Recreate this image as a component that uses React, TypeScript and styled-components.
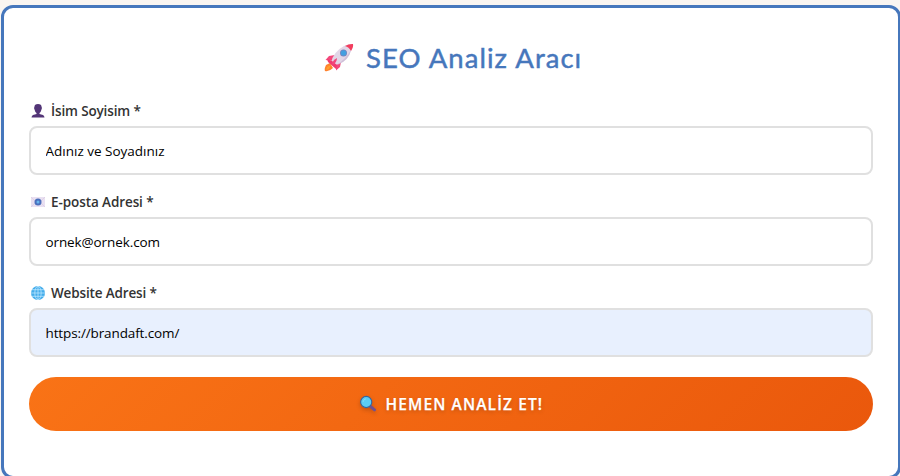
import React from "react";
import styled, { createGlobalStyle } from "styled-components";

const GlobalStyle = createGlobalStyle`
  * { box-sizing: border-box; }
  html, body { margin: 0; height: 476px; overflow: hidden; background: #f9f5f1; }
`;

const Page = styled.main`
  height: 476px;
  padding: 5px 0 0 1px;
  overflow: hidden;
  font-family: "Open Sans", "Noto Sans", sans-serif;
`;

const Card = styled.form`
  width: 900px;
  height: 474px;
  padding: 30px 25px 0;
  border: 3px solid #4677bc;
  border-radius: 12px;
  background: #fff;
`;

const Title = styled.h1`
  display: flex;
  align-items: center;
  height: 40px;
  margin: 0 0 23px 295px;
  gap: 12px;
  color: #4677bc;
  font: 400 27.5px/40px Lato, sans-serif;
  letter-spacing: 1.05px;
  white-space: nowrap;
  -webkit-text-stroke: 0.45px #4677bc;
`;

const Field = styled.div`
  height: 91px;
`;

const Label = styled.label<{ $spacing: number }>`
  display: flex;
  align-items: center;
  gap: 5px;
  height: 20px;
  margin-bottom: 5px;
  padding-left: 1px;
  color: #333;
  font-size: 13.5px;
  font-weight: 600;
  line-height: 20px;
  letter-spacing: ${(p) => p.$spacing}px;
  white-space: nowrap;
`;

const Input = styled.input<{ $filled?: boolean; $spacing: number }>`
  display: block;
  width: 844px;
  height: 49px;
  padding: 0 14.5px;
  border: 2px solid #e0e0e0;
  border-radius: 8px;
  outline: 0;
  background: ${(p) => (p.$filled ? "#e8f0fe" : "#fff")};
  color: #000;
  font: 400 13.5px "Open Sans", "Noto Sans", sans-serif;
  letter-spacing: ${(p) => p.$spacing}px;
`;

const Submit = styled.button`
  display: flex;
  align-items: center;
  width: 844px;
  height: 54px;
  margin-top: 3px;
  padding: 0 0 0 330px;
  gap: 8.5px;
  border: 0;
  border-radius: 27px;
  background: linear-gradient(135deg, #f97316, #ea580c);
  color: #fff;
  font: 600 15.5px/54px "Open Sans", "Noto Sans", sans-serif;
  letter-spacing: 1.12px;
  -webkit-text-stroke: 0.25px #fff;
  text-shadow: 0 2px 4px rgba(0, 0, 0, 0.2);
  white-space: nowrap;
`;

const Icon = styled.svg`
  display: block;
  flex: none;
`;

const SearchIcon = styled(Icon)`
  filter: drop-shadow(0 2px 2px rgba(0, 0, 0, 0.2));
`;

const Rocket = () => (
  <Icon width="30" height="30" viewBox="0 0 30 30">
    <path d="M6 20L2 22Q0 26 1 28Q5 29 9 25Z" fill="#ff822d" />
    <path d="M3 24L2 27L5 26L7 22Z" fill="#ffa02e" />
    <path d="M11 12L5 13L1.5 17L9 18ZM17 19L16 24L12 27.5L12 20Z" fill="#f3487b" />
    <path d="M7 20Q9 9 20 3Q24 1 29 1Q28 7 25 12Q20 20 9 23Z" fill="#e2d6e7" />
    <path d="M13 22Q21 16 25 10L27 7Q25 17 15 21Z" fill="#cfc0d8" />
    <path d="M21 3Q25 0.7 29 1Q29.7 4 27 8Q25 4 21 3Z" fill="#f23d5e" />
    <path d="M3 16L8 18L13 22L12 26L4 19Z" fill="#ee3c70" />
    <path d="M8 20Q10 16 13 15Q13 19 9 22Z" fill="#f3487b" />
    <circle cx="19.5" cy="10" r="3.5" fill="#7883bd" />
    <circle cx="19.6" cy="9.9" r="2.7" fill="#429fe0" />
  </Icon>
);

const Person = () => (
  <Icon width="16" height="16" viewBox="0 0 16 16">
    <path d="M4.4 4Q4.4 1 8 1T11.6 4Q12.4 5 11.5 6.4Q10.9 9 9.5 9.9V11L13 12Q14.3 12.6 14.5 14.5H1.5Q1.7 12.6 3 12L6.5 11V9.9Q5 9 4.5 6.4Q3.6 5 4.4 4Z" fill="#533577" />
  </Icon>
);

const Mail = () => (
  <Icon width="16" height="16" viewBox="0 0 16 16">
    <path d="M1 3H15V13H1Z" fill="#e9e0f1" />
    <path d="M1 3L6 8L1 13M15 3L10 8L15 13" fill="none" stroke="#dacbe3" strokeWidth=".7" />
    <circle cx="8" cy="8" r="3.5" fill="#4c70bd" />
    <circle cx="8" cy="8" r="1.5" fill="#68b5ed" />
  </Icon>
);

const Globe = () => (
  <Icon width="16" height="16" viewBox="0 0 16 16">
    <circle cx="8" cy="8" r="7" fill="#45adeb" />
    <g fill="none" stroke="#b9e6ff" strokeWidth=".8">
      <ellipse cx="8" cy="8" rx="3.2" ry="6.7" />
      <path d="M8 1V15M1 8H15M2 4.7H14M2 11.3H14" />
    </g>
  </Icon>
);

const Magnifier = () => (
  <SearchIcon width="18" height="18" viewBox="0 0 18 18">
    <path d="M11.5 11.5L15.5 14.8" stroke="#74508c" strokeWidth="3" strokeLinecap="round" />
    <circle cx="7.2" cy="7" r="5.6" fill="#5bcdf5" stroke="#35669f" strokeWidth="1.1" />
    <path d="M4 7Q4.5 4 7 3.8" fill="none" stroke="#7bdcfc" />
  </SearchIcon>
);

export default function App() {
  return (
    <>
      <GlobalStyle />
      <Page>
        <Card onSubmit={(e) => e.preventDefault()}>
          <Title><Rocket /><span>SEO Analiz Aracı</span></Title>
          <Field>
            <Label htmlFor="name" $spacing={-0.14}><Person /><span>İsim Soyisim *</span></Label>
            <Input id="name" defaultValue="Adınız ve Soyadınız" $spacing={0} />
          </Field>
          <Field>
            <Label htmlFor="email" $spacing={-0.09}><Mail /><span>E-posta Adresi *</span></Label>
            <Input id="email" defaultValue="ornek@ornek.com" $spacing={-0.1} />
          </Field>
          <Field>
            <Label htmlFor="site" $spacing={-0.15}><Globe /><span>Website Adresi *</span></Label>
            <Input id="site" defaultValue="https://brandaft.com/" $spacing={-0.12} $filled />
          </Field>
          <Submit type="submit"><Magnifier /><span>HEMEN ANALİZ ET!</span></Submit>
        </Card>
      </Page>
    </>
  );
}
